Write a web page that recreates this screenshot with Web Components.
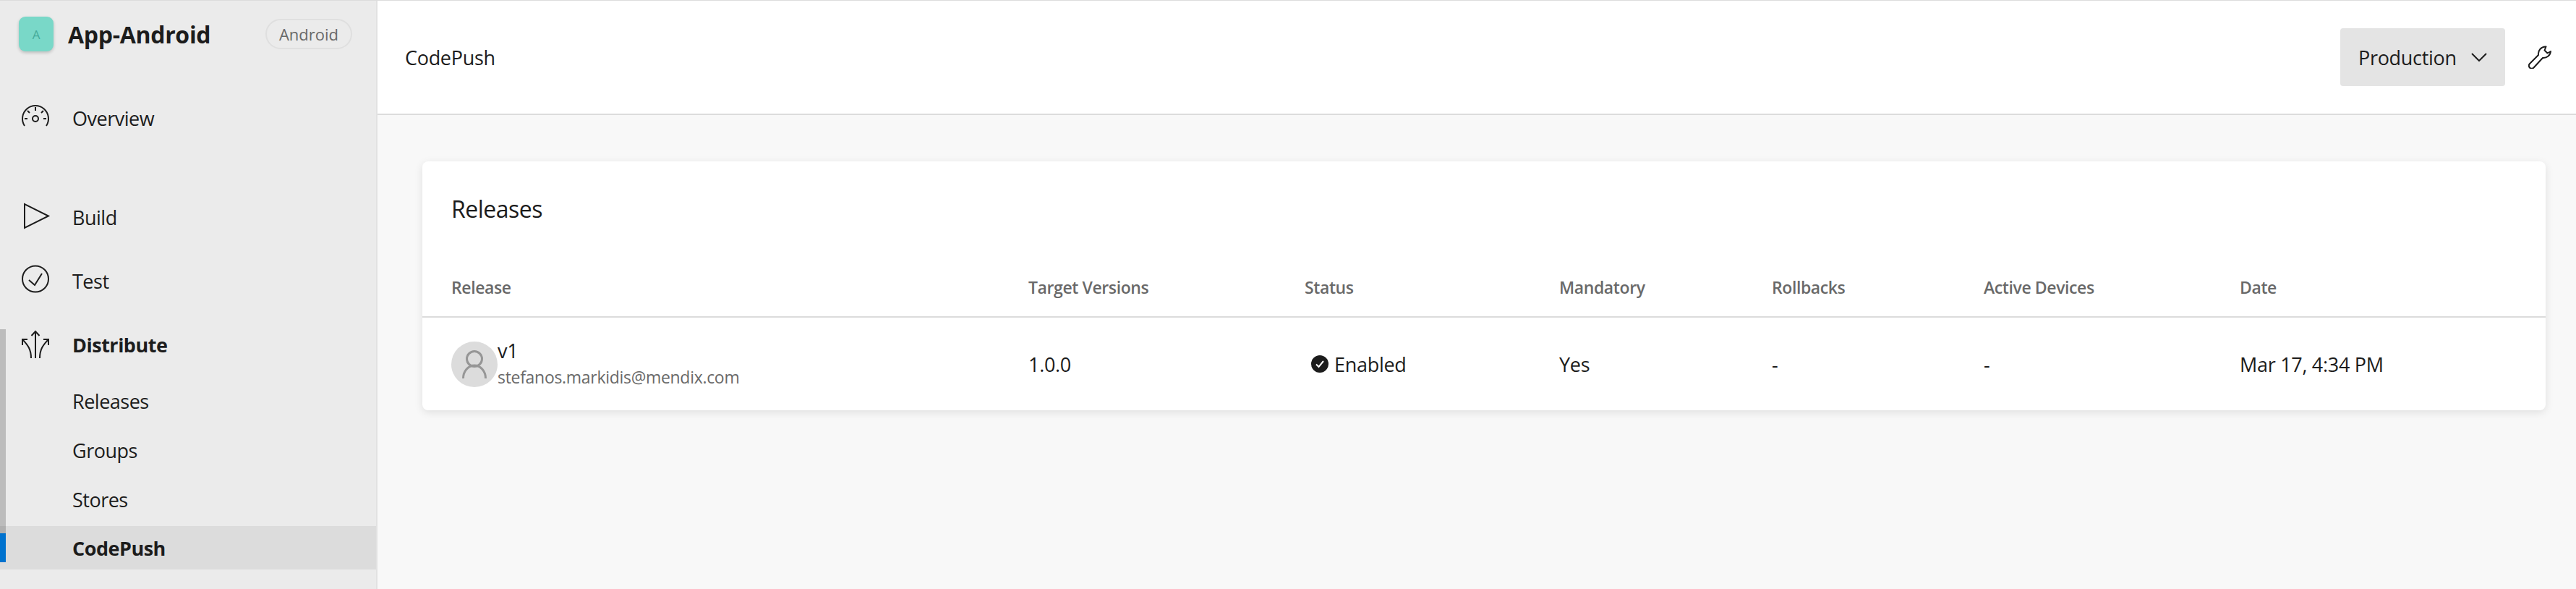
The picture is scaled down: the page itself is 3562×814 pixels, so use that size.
<!DOCTYPE html>
<html>
<head>
<meta charset="utf-8">
<style>
    html, body { margin: 0; height: 100%; }
    body { font-family: "Open Sans", "Noto Sans", sans-serif; color: #1c1c1c; background: #f8f8f8; overflow: hidden; }
</style>
</head>
<body>
<app-shell>
    <app-sidebar slot="sidebar"></app-sidebar>
    <page-header slot="header"></page-header>
    <releases-card slot="content"></releases-card>
</app-shell>
<script>
const shellTemplate = document.createElement('template');
shellTemplate.innerHTML = /*html*/ `
    <style>
        :host { display: grid; grid-template-columns: 522px 1fr; height: 814px; border-top: 1px solid #dcdcdc; box-sizing: border-box; }
        .main { display: flex; flex-direction: column; min-width: 0; }
        .content { padding: 64px 42px 0 62px; }
    </style>
    <slot name="sidebar"></slot>
    <div class="main">
        <slot name="header"></slot>
        <div class="content"><slot name="content"></slot></div>
    </div>
`;
class AppShell extends HTMLElement {
    constructor() {
        super();
        this.attachShadow({mode: "open"});
        this.shadowRoot.appendChild(shellTemplate.content.cloneNode(true));
    }
}
customElements.define('app-shell', AppShell);

const sidebarTemplate = document.createElement('template');
sidebarTemplate.innerHTML = /*html*/ `
    <style>
        :host { display: block; background: #ebebeb; border-right: 2px solid #e2e2e2; box-sizing: border-box; position: relative; }
        .app { display: flex; align-items: center; height: 92px; margin-bottom: 26px; padding: 0 33px 0 26px; }
        .logo { width: 48px; height: 48px; border-radius: 9px; background: #79d8c8; color: #45ab9b; display: flex; align-items: center; justify-content: center; font-size: 17px; box-shadow: 0 2px 4px rgba(0,0,0,.2); }
        .name { font-size: 32px; font-weight: 700; margin-left: 20px; flex: 1; letter-spacing: -0.3px; }
        .badge { border: 2px solid #dfdfdf; border-radius: 22px; font-size: 22px; line-height: 38px; color: #696969; width: 120px; box-sizing: border-box; text-align: center; }
        .spacer { height: 49px; }
        .scroll { position: absolute; left: 0; top: 454px; width: 8px; height: 282px; background: rgba(0,0,0,.2); }
        svg { overflow: visible; }
    </style>
    <div class="app">
        <div class="logo">A</div>
        <div class="name">App-Android</div>
        <div class="badge">Android</div>
    </div>
    <nav-item label="Overview">
        <svg viewBox="0 0 38 38" width="38" height="38" fill="none" stroke="currentColor" stroke-width="2"><path d="M4 30A18 18 0 1 1 34 30M19 4v5M8 9l3 3M30 9l-3 3M4 20h4M30 20h4"/><circle cx="19" cy="20" r="4"/></svg>
    </nav-item>
    <div class="spacer"></div>
    <nav-item label="Build">
        <svg viewBox="0 0 38 38" width="38" height="38" fill="none" stroke="currentColor" stroke-width="2"><path d="M4 1V34L37 17.5z"/></svg>
    </nav-item>
    <nav-item label="Test">
        <svg viewBox="0 0 38 38" width="38" height="38" fill="none" stroke="currentColor" stroke-width="2"><circle cx="19" cy="16.5" r="18"/><path d="M10 18l8 7 10-16"/></svg>
    </nav-item>
    <nav-item label="Distribute" bold>
        <svg viewBox="0 0 38 38" width="38" height="38" fill="none" stroke="currentColor" stroke-width="2"><path d="M19 38V1M13.500 7 19 1l5.500 6M1 20v-8h7M1.500 12.500C7 19 13 24 13 38M37 20v-8h-7M36.500 12.500C31 19 25 24 25 38"/></svg>
    </nav-item>
    <sub-item>Releases</sub-item>
    <sub-item>Groups</sub-item>
    <sub-item>Stores</sub-item>
    <sub-item active>CodePush</sub-item>
    <div class="scroll"></div>
`;
class AppSidebar extends HTMLElement {
    constructor() {
        super();
        this.attachShadow({mode: "open"});
        this.shadowRoot.appendChild(sidebarTemplate.content.cloneNode(true));
    }
}
customElements.define('app-sidebar', AppSidebar);

const navItemTemplate = document.createElement('template');
navItemTemplate.innerHTML = /*html*/ `
    <style>
        :host { display: flex; align-items: center; height: 88px; padding-left: 30px; font-size: 27px; }
        :host([bold]) .label { font-weight: 700; }
        .icon { width: 38px; height: 38px; display: flex; color: #1c1c1c; }
        .label { margin-left: 32px; letter-spacing: -0.5px; }
    </style>
    <div class="icon"><slot></slot></div>
    <div class="label"></div>
`;
class NavItem extends HTMLElement {
    constructor() {
        super();
        this.attachShadow({mode: "open"});
        this.shadowRoot.appendChild(navItemTemplate.content.cloneNode(true));
        this.shadowRoot.querySelector('.label').textContent = this.getAttribute('label');
    }
}
customElements.define('nav-item', NavItem);

const subItemTemplate = document.createElement('template');
subItemTemplate.innerHTML = /*html*/ `
    <style>
        :host { display: flex; align-items: center; height: 68px; padding-left: 100px; font-size: 27px; letter-spacing: -0.5px; position: relative; }
        :host([active]) { background: #dcdcdc; height: 60px; font-weight: 700; margin-top: 3px; }
        :host([active])::before { content: ""; position: absolute; left: 0; top: 10px; bottom: 10px; width: 8px; background: #0072ce; }
    </style>
    <slot></slot>
`;
class SubItem extends HTMLElement {
    constructor() {
        super();
        this.attachShadow({mode: "open"});
        this.shadowRoot.appendChild(subItemTemplate.content.cloneNode(true));
    }
}
customElements.define('sub-item', SubItem);

const headerTemplate = document.createElement('template');
headerTemplate.innerHTML = /*html*/ `
    <style>
        :host { display: flex; align-items: center; height: 158px; background: #fff; border-bottom: 2px solid #dcdcdc; box-sizing: border-box; padding: 0 34px 0 38px; font-size: 27px; letter-spacing: -0.3px; flex: none; }
        .title { flex: 1; }
        .env { display: flex; align-items: center; justify-content: space-between; background: #e4e4e4; border-radius: 4px; width: 228px; height: 80px; box-sizing: border-box; padding: 0 25px; }
        .wrench { margin-left: 32px; display: flex; }
    </style>
    <div class="title">CodePush</div>
    <div class="env">Production
        <svg viewBox="0 0 22 12" width="22" height="12" fill="none" stroke="#1c1c1c" stroke-width="2"><path d="M1 1l10 10L21 1"/></svg>
    </div>
    <div class="wrench">
        <svg viewBox="0 0 32 32" width="32" height="32" fill="none" stroke="#1c1c1c" stroke-width="2" stroke-linejoin="round"><path d="M24.500 1.500A10 10 0 0 0 14 13L2 25A3.800 3.800 0 0 0 7.500 30.500L20 17A10 10 0 0 0 31 8L26.500 10.500 22.500 6.500z"/></svg>
    </div>
`;
class PageHeader extends HTMLElement {
    constructor() {
        super();
        this.attachShadow({mode: "open"});
        this.shadowRoot.appendChild(headerTemplate.content.cloneNode(true));
    }
}
customElements.define('page-header', PageHeader);

const cardTemplate = document.createElement('template');
cardTemplate.innerHTML = /*html*/ `
    <style>
        :host { display: block; background: #fff; border-radius: 8px; box-shadow: 0 3px 12px rgba(0,0,0,.1); height: 344px; }
        h2 { margin: 0; font-weight: 400; font-size: 32px; letter-spacing: -0.5px; height: 150px; padding: 44px 40px 0; box-sizing: border-box; line-height: 44px; }
        .row { display: grid; grid-template-columns: 798px 382px 352px 294px 293px 354px 1fr; padding-left: 40px; align-items: center; }
        .head { height: 66px; box-sizing: border-box; padding-bottom: 16px; border-bottom: 2px solid #dcdcdc; color: #696969; font-size: 23px; font-weight: 600; letter-spacing: -0.4px; }
        .body { height: 128px; font-size: 27px; letter-spacing: -0.3px; }
        .rel { display: flex; align-items: center; }
        .avatar { width: 64px; height: 63px; border-radius: 50%; background: #dcdcdc; display: flex; align-items: center; justify-content: center; flex: none; }
        .v { line-height: 36px; }
        .mail { font-size: 23px; line-height: 36px; color: #696969; letter-spacing: -0.3px; }
        .status { display: flex; align-items: center; gap: 8px; padding-left: 9px; }
    </style>
    <h2>Releases</h2>
    <div class="row head">
        <div>Release</div><div>Target Versions</div><div>Status</div><div>Mandatory</div><div>Rollbacks</div><div>Active Devices</div><div>Date</div>
    </div>
    <div class="row body">
        <div class="rel">
            <div class="avatar">
                <svg viewBox="0 0 34 39" width="34" height="39" fill="none" stroke="#969696" stroke-width="3"><circle cx="17" cy="12" r="10.500"/><path d="M1.500 39c0-10 7-18 15.500-18s15.500 8 15.500 18"/></svg>
            </div>
            <div><div class="v">v1</div><div class="mail">stefanos.markidis@mendix.com</div></div>
        </div>
        <div>1.0.0</div>
        <div class="status">
            <svg viewBox="0 0 24 24" width="24" height="24"><circle cx="12" cy="12" r="12" fill="#1c1c1c"/><path d="M7 12.500l3.500 3.500 6.500-8" fill="none" stroke="#fff" stroke-width="2"/></svg>
            Enabled
        </div>
        <div>Yes</div><div>-</div><div>-</div><div>Mar 17, 4:34 PM</div>
    </div>
`;
class ReleasesCard extends HTMLElement {
    constructor() {
        super();
        this.attachShadow({mode: "open"});
        this.shadowRoot.appendChild(cardTemplate.content.cloneNode(true));
    }
}
customElements.define('releases-card', ReleasesCard);
</script>
</body>
</html>
